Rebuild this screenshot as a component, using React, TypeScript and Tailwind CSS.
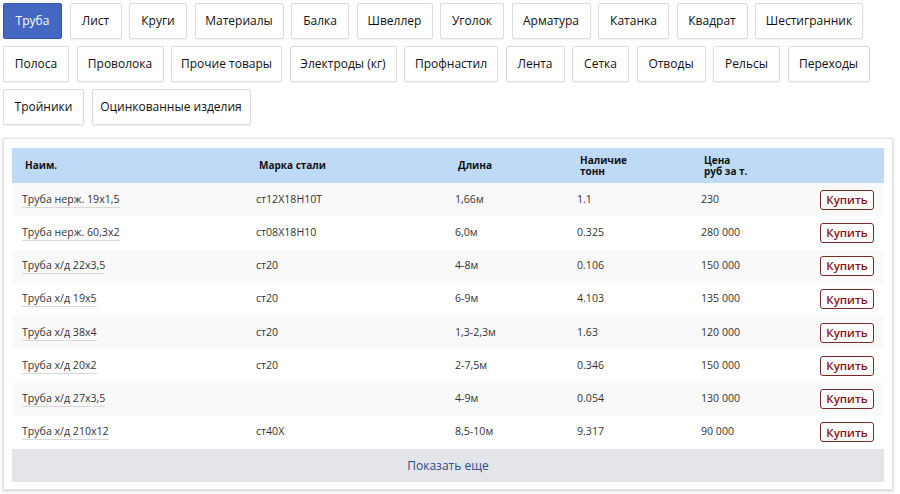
import React from "react";

type T = { label: string; w: string; active?: boolean };

const tabs1: T[] = [
  { label: "Труба", w: "w-[59px]", active: true },
  { label: "Лист", w: "w-[52px]" },
  { label: "Круги", w: "w-[58px]" },
  { label: "Материалы", w: "w-[89px]" },
  { label: "Балка", w: "w-[58px]" },
  { label: "Швеллер", w: "w-[76px]" },
  { label: "Уголок", w: "w-[64px]" },
  { label: "Арматура", w: "w-[79px]" },
  { label: "Катанка", w: "w-[71px]" },
  { label: "Квадрат", w: "w-[71px]" },
  { label: "Шестигранник", w: "w-[108px]" },
];
const tabs2: T[] = [
  { label: "Полоса", w: "w-[66px]" },
  { label: "Проволока", w: "w-[87px]" },
  { label: "Прочие товары", w: "w-[111px]" },
  { label: "Электроды (кг)", w: "w-[107px]" },
  { label: "Профнастил", w: "w-[94px]" },
  { label: "Лента", w: "w-[59px]" },
  { label: "Сетка", w: "w-[57px]" },
  { label: "Отводы", w: "w-[69px]" },
  { label: "Рельсы", w: "w-[67px]" },
  { label: "Переходы", w: "w-[82px]" },
];
const tabs3: T[] = [
  { label: "Тройники", w: "w-[81px]" },
  { label: "Оцинкованные изделия", w: "w-[159px]" },
];

const rows = [
  ["Труба нерж. 19x1,5", "ст12Х18Н10Т", "1,66м", "1.1", "230"],
  ["Труба нерж. 60,3x2", "ст08Х18Н10", "6,0м", "0.325", "280 000"],
  ["Труба х/д 22x3,5", "ст20", "4-8м", "0.106", "150 000"],
  ["Труба х/д 19x5", "ст20", "6-9м", "4.103", "135 000"],
  ["Труба х/д 38x4", "ст20", "1,3-2,3м", "1.63", "120 000"],
  ["Труба х/д 20x2", "ст20", "2-7,5м", "0.346", "150 000"],
  ["Труба х/д 27x3,5", "", "4-9м", "0.054", "130 000"],
  ["Труба х/д 210x12", "ст40Х", "8,5-10м", "9.317", "90 000"],
];

function Tab({ t }: { t: T }) {
  return (
    <div
      className={
        t.w +
        " h-[36px] shrink-0 flex items-center justify-center whitespace-nowrap rounded-[2px] border text-[12px] " +
        (t.active
          ? "bg-[#4468c2] border-[#3555a8] text-white"
          : "bg-white border-[#dcdcdc] text-[#111] shadow-[0_1px_1px_rgba(0,0,0,0.06)]")
      }
    >
      {t.label}
    </div>
  );
}

export default function App() {
  return (
    <div className="w-[900px] h-[494px] bg-white overflow-hidden" style={{ fontFamily: '"Open Sans", sans-serif' }}>
      <div className="pl-[3px] pt-[3px] pr-[7px] flex flex-col gap-[7px]">
        <div className="flex gap-[7.5px]">
          {tabs1.map((t) => (
            <Tab key={t.label} t={t} />
          ))}
        </div>
        <div className="flex gap-[7.5px]">
          {tabs2.map((t) => (
            <Tab key={t.label} t={t} />
          ))}
        </div>
        <div className="flex gap-[7.5px]">
          {tabs3.map((t) => (
            <Tab key={t.label} t={t} />
          ))}
        </div>
      </div>

      <div className="ml-[3px] mt-[13px] w-[890px] border border-[#e3e3e3] shadow-[0_1px_3px_rgba(0,0,0,0.2)] px-[8px] pt-[9px] pb-[7px] bg-white">
        <div className="grid grid-cols-[234px_199px_122px_124px_1fr] h-[35px] bg-[#bfdaf6] items-center text-[10px] font-bold text-[#111] leading-[11px]">
          <div className="pl-[13px]">Наим.</div>
          <div className="pl-[13px]">Марка стали</div>
          <div className="pl-[13px]">Длина</div>
          <div className="pl-[13px]">
            Наличие
            <br />
            тонн
          </div>
          <div className="pl-[13px]">
            Цена
            <br />
            руб за т.
          </div>
        </div>
        {rows.map((r, i) => (
          <div
            key={i}
            className={
              "grid grid-cols-[234px_199px_122px_124px_1fr] h-[33.25px] items-center text-[10.6px] text-[#333] " +
              (i % 2 === 0 ? "bg-[#f9f9f9]" : "bg-white")
            }
          >
            <div className="pl-[10px]">
              <span className="border-b border-[#d8d8d8] pb-[1px]">{r[0]}</span>
            </div>
            <div className="pl-[10px]">{r[1]}</div>
            <div className="pl-[10px]">{r[2]}</div>
            <div className="pl-[10px]">{r[3]}</div>
            <div className="flex items-center justify-between pl-[10px] pr-[10px]">
              <span>{r[4]}</span>
              <button className="w-[54px] h-[20px] border border-[#7a2a2a] rounded-[3px] text-[#8a1010] text-[11.5px] font-semibold leading-none bg-white">
                Купить
              </button>
            </div>
          </div>
        ))}
        <div className="h-[33px] bg-[#e4e5e9] flex items-center justify-center text-[12px] text-[#2d4a8d]">
          Показать еще
        </div>
      </div>
    </div>
  );
}
